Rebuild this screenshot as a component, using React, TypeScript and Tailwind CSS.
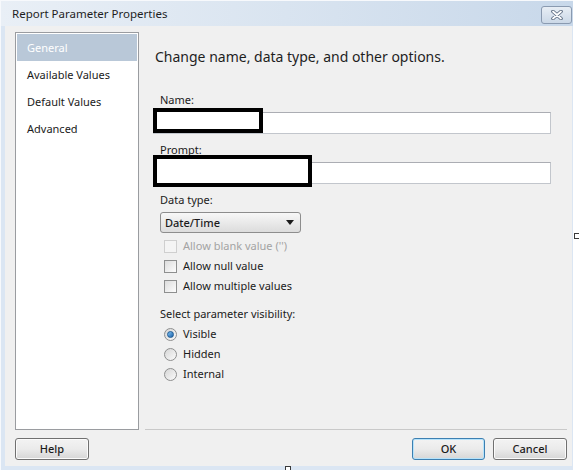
import React from 'react';

const font = { fontFamily: '"Noto Sans", "Open Sans", sans-serif' };

function Checkbox({ label, disabled }: { label: string; disabled?: boolean }) {
  return (
    <div className="flex items-center h-5">
      <span
        className={
          disabled
            ? 'w-[13px] h-[13px] border border-[#cfcfcf] bg-[#f4f4f4]'
            : 'w-[13px] h-[13px] border border-[#8e8f8f] bg-gradient-to-br from-[#dcdcdc] to-[#fdfdfd]'
        }
      />
      <span className={disabled ? 'ml-[6px] text-[#a3a3a3]' : 'ml-[6px] text-[#1b1b1b]'}>{label}</span>
    </div>
  );
}

function Radio({ label, checked }: { label: string; checked?: boolean }) {
  return (
    <div className="flex items-center h-5">
      <span className="w-[13px] h-[13px] rounded-full border border-[#8e8f8f] bg-gradient-to-br from-[#d6d6d6] to-[#fbfbfb] flex items-center justify-center">
        {checked && <span className="w-[7px] h-[7px] rounded-full bg-gradient-to-br from-[#7fc3f5] to-[#1b62a8] border border-[#1d5a93]" />}
      </span>
      <span className="ml-[6px] text-[#1b1b1b]">{label}</span>
    </div>
  );
}

function Button({ children, primary, className }: { children: React.ReactNode; primary?: boolean; className?: string }) {
  return (
    <button
      className={
        (primary
          ? 'border-[#3c7fb1] shadow-[inset_0_0_0_1px_#b6e3fb] '
          : 'border-[#707070] shadow-[inset_0_0_0_1px_#fbfbfb] ') +
        'h-[22px] border rounded-[3px] bg-gradient-to-b from-[#f3f3f3] via-[#ebebeb] to-[#d6d6d6] text-[#1b1b1b] text-[11px] font-medium ' +
        (className ?? '')
      }
    >
      {children}
    </button>
  );
}

export default function App() {
  return (
    <div className="relative w-[579px] h-[470px] bg-white overflow-hidden text-[11px] leading-4" style={font}>
      <div className="w-[573px] h-[470px] flex flex-col bg-[#dbe6f3] border-l border-t border-[#f7f9fc]">
        {/* title bar */}
        <div className="h-[25px] flex items-center justify-between pl-[11px] pr-[1px] bg-gradient-to-r from-[#e9eff6] via-[#d9e4f0] to-[#c8d8ea]">
          <span className="text-[11.5px] text-[#1e1e1e]">Report Parameter Properties</span>
          <div className="w-[31px] h-[18px] mt-[2px] border border-[#8a9ab0] rounded-[3px] bg-gradient-to-b from-[#e8eef5] to-[#cbd8e7] flex items-center justify-center">
            <svg width="14" height="10" viewBox="0 0 14 10">
              <path d="M3 1.5 L11 8.5 M11 1.5 L3 8.5" stroke="#5b6b80" strokeWidth="3.6" strokeLinecap="round" />
              <path d="M3 1.5 L11 8.5 M11 1.5 L3 8.5" stroke="#ffffff" strokeWidth="1.8" strokeLinecap="round" />
            </svg>
          </div>
        </div>

        {/* content */}
        <div className="ml-[4px] w-[567px] h-[440px] bg-[#f0f0f0] flex flex-col pt-[6px] pl-[10px] pr-[5px]">
          <div className="flex h-[398px]">
            {/* nav list */}
            <div className="w-[124px] h-[398px] bg-white border border-[#9a9ca0] p-[1px]">
              <div className="h-[27px] bg-[#b9c8d8] text-white flex items-center pl-[10px]">General</div>
              <div className="h-[27px] flex items-center pl-[10px] text-[#1b1b1b]">Available Values</div>
              <div className="h-[27px] flex items-center pl-[10px] text-[#1b1b1b]">Default Values</div>
              <div className="h-[27px] flex items-center pl-[10px] text-[#1b1b1b]">Advanced</div>
            </div>

            {/* right panel */}
            <div className="ml-[6px] w-[422px] flex flex-col border-b border-[#c9c9c9]">
              <div className="mt-[15px] ml-[10px] text-[14px] leading-5 text-[#1e1e1e]">
                Change name, data type, and other options.
              </div>

              <div className="mt-[25px] ml-[15px] text-[#1b1b1b]">Name:</div>
              <div className="relative mt-[4px] ml-[8px] w-[398px] h-[22px] bg-white border border-[#c2c6cc] border-t-[#abadb3]">
                <div className="absolute left-[-1px] top-[-5px] w-[110px] h-[25px] border-[4px] border-black bg-white" />
              </div>

              <div className="mt-[8px] ml-[15px] text-[#1b1b1b]">Prompt:</div>
              <div className="relative mt-[4px] ml-[8px] w-[398px] h-[22px] bg-white border border-[#c2c6cc] border-t-[#abadb3]">
                <div className="absolute left-[-1px] top-[-8px] w-[159px] h-[32px] border-[4px] border-black bg-white" />
              </div>

              <div className="mt-[8px] ml-[15px] text-[#1b1b1b]">Data type:</div>
              <div className="mt-[4px] ml-[15px] w-[141px] h-[21px] border border-[#8d8d8d] rounded-[3px] bg-gradient-to-b from-[#f8f8f8] to-[#dcdcdc] flex items-center justify-between pl-[4px] pr-[6px]">
                <span className="text-[#1b1b1b] font-medium">Date/Time</span>
                <svg width="8" height="5" viewBox="0 0 8 5">
                  <path d="M0 0 H8 L4 5 Z" fill="#1b1b1b" />
                </svg>
              </div>

              <div className="mt-[3px] ml-[19px] flex flex-col">
                <Checkbox label="Allow blank value ('')" disabled />
                <Checkbox label="Allow null value" />
                <Checkbox label="Allow multiple values" />
              </div>

              <div className="mt-[10px] ml-[15px] text-[#1b1b1b]">Select parameter visibility:</div>
              <div className="mt-[2px] ml-[19px] flex flex-col">
                <Radio label="Visible" checked />
                <Radio label="Hidden" />
                <Radio label="Internal" />
              </div>
            </div>
          </div>

          {/* buttons */}
          <div className="mt-[8px] flex items-center">
            <Button className="w-[74px]">Help</Button>
            <div className="flex-1" />
            <Button primary className="w-[73px]">OK</Button>
            <Button className="w-[74px] ml-[8px]">Cancel</Button>
          </div>
        </div>
      </div>

      {/* designer handles */}
      <div className="absolute left-[574px] top-[233px] w-[6px] h-[6px] border border-[#3a3a3a] bg-white" />
      <div className="absolute left-[285px] top-[466px] w-[6px] h-[6px] border border-[#3a3a3a] bg-white" />
    </div>
  );
}
